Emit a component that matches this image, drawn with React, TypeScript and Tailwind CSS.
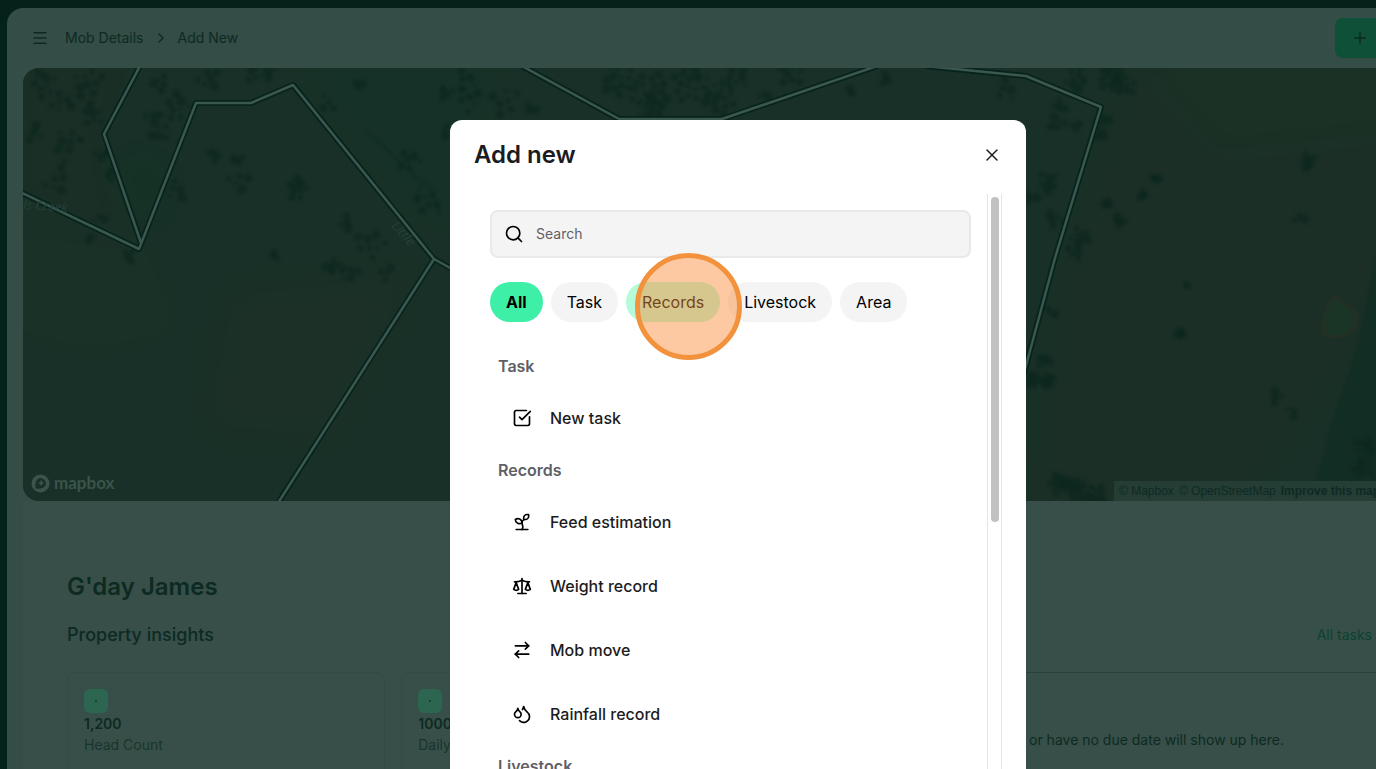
import { useState } from "react";
import {
  ArrowRightLeft, ChevronRight, Droplets, Menu, Plus, Scale, Search, Sprout, SquareCheckBig, X,
} from "lucide-react";
import clsx from "clsx";

const filters = ["All", "Task", "Records", "Livestock", "Area"];

const sections = [
  { title: "Task", items: [{ label: "New task", icon: SquareCheckBig }] },
  {
    title: "Records",
    items: [
      { label: "Feed estimation", icon: Sprout },
      { label: "Weight record", icon: Scale },
      { label: "Mob move", icon: ArrowRightLeft },
      { label: "Rainfall record", icon: Droplets },
    ],
  },
  { title: "Livestock", items: [] },
];

const insights = [
  { value: "1,200", label: "Head Count" },
  { value: "1000", label: "Daily" },
];

// Paddock boundaries
const fences = [
  "M140 66 L104 134 L141 243",
  "M20 192 L139 249 L196 103 L251 103 L293 85 L434 259 L278 503",
  "M434 259 L470 279",
  "M522 66 L619 119 L722 119 L880 65",
  "M925 66 L1026 76 L1101 107 L1055 258 L1020 388",
];

// Tree clusters: x, y, spread, count
const clusters = [
  [45, 85, 14, 8], [88, 82, 16, 9], [62, 102, 12, 6], [92, 115, 12, 7], [68, 140, 14, 7],
  [55, 185, 12, 5], [35, 135, 10, 4], [62, 163, 6, 2], [100, 155, 8, 3], [110, 175, 6, 3],
  [160, 82, 9, 5], [208, 80, 12, 6], [255, 75, 10, 5], [270, 72, 8, 4], [152, 118, 9, 4],
  [178, 108, 14, 8], [160, 134, 10, 5], [175, 190, 12, 6], [215, 157, 7, 3], [238, 160, 6, 3],
  [238, 182, 12, 5], [298, 190, 11, 9], [326, 103, 10, 4], [358, 84, 6, 3], [410, 160, 12, 6],
  [425, 200, 14, 7], [345, 222, 8, 4], [370, 245, 16, 8], [335, 266, 10, 6], [350, 272, 10, 5],
  [386, 272, 8, 4], [274, 254, 5, 3], [100, 218, 7, 3], [89, 238, 4, 2], [447, 92, 8, 4],
  [445, 130, 6, 3], [470, 100, 14, 6], [505, 100, 16, 7], [530, 108, 7, 3], [465, 80, 12, 5],
  [620, 80, 18, 14], [650, 92, 20, 16], [690, 84, 20, 16], [720, 98, 18, 14], [650, 110, 16, 12],
  [735, 80, 14, 8], [790, 73, 14, 8], [765, 95, 6, 3], [885, 80, 6, 3], [852, 92, 4, 2],
  [1075, 78, 12, 8], [1112, 78, 14, 14], [1125, 84, 12, 10], [1060, 105, 8, 4], [1005, 90, 12, 5],
  [1058, 122, 9, 5], [1075, 126, 6, 3], [1102, 122, 8, 6], [1102, 136, 6, 4], [1048, 182, 10, 8],
  [1032, 198, 6, 4], [1054, 220, 9, 5], [1080, 236, 10, 8], [1076, 252, 9, 5], [1108, 204, 4, 4],
  [1143, 195, 4, 4], [1155, 179, 4, 4], [1120, 221, 6, 6], [1308, 161, 8, 7], [1300, 218, 7, 3],
  [1181, 334, 5, 6], [1187, 285, 3, 2], [1043, 361, 7, 6], [1035, 380, 8, 9], [1048, 380, 7, 8],
  [1050, 312, 6, 3], [1277, 398, 8, 4], [1293, 412, 6, 3], [1060, 485, 11, 14], [1080, 490, 13, 16],
  [1095, 496, 11, 12], [1366, 448, 10, 8], [1364, 468, 10, 8], [130, 255, 8, 4],
];

const trees = clusters.flatMap(([x, y, spread, count], c) =>
  Array.from({ length: count }, (_, i) => {
    const angle = i * 2.4 + c * 1.7;
    const reach = spread * Math.sqrt((i + 0.3) / count);
    return { x: x + Math.cos(angle) * reach, y: y + Math.sin(angle) * reach, r: 2 + ((i * 7 + c * 3) % 5) * 0.6 };
  })
);

function PaddockMap() {
  return (
    <svg
      className="absolute inset-0 h-full w-full"
      viewBox="0 0 1353 433"
      preserveAspectRatio="xMinYMin slice"
      aria-hidden="true"
    >
      <defs>
        <filter id="soft" x="-20%" y="-20%" width="140%" height="140%" colorInterpolationFilters="sRGB">
          <feGaussianBlur stdDeviation="1.6" />
        </filter>
        <filter id="haze" x="-30%" y="-30%" width="160%" height="160%" colorInterpolationFilters="sRGB">
          <feGaussianBlur stdDeviation="18" />
        </filter>
      </defs>
      <rect width="1353" height="433" fill="#183027" />
      <g transform="translate(-23 -68)">
        <g filter="url(#haze)">
          <rect x="-60" y="0" width="1500" height="600" fill="#183027" />
          <path d="M20 60H135L100 134L139 249L20 193Z" fill="#1a2f26" />
          <path d="M20 240H140L180 330L90 350L20 330Z" fill="#1a3127" />
          <path d="M230 290L420 270L330 440L200 430Z" fill="#1c3027" />
          <path d="M110 150L170 170L145 240Z" fill="#133226" />
          <path d="M290 60H500L450 240L400 200Z" fill="#163228" />
          <path d="M1130 60H1400V300L1320 400L1230 520H1030L1060 280Z" fill="#1b2f26" />
          <path d="M1140 60H1400V130L1220 150Z" fill="#1b3125" />
        </g>
        <path d="M1376 255L1358 345L1330 430L1312 501H1376Z" fill="#122d23" filter="url(#soft)" />
        <path
          d="M1334 297C1326 305 1322 318 1324 335C1334 339 1347 337 1356 325C1359 313 1350 305 1334 297Z"
          fill="#1a3426"
          stroke="#242f25"
          strokeWidth="3"
        />
        <path d="M365 130C385 145 400 165 418 178S432 200 440 215" fill="none" stroke="#112a21" strokeWidth="2" filter="url(#soft)" />
        <g fill="#0c261e" fillOpacity="0.7" filter="url(#soft)">
          {trees.map((tree, i) => (
            <circle key={i} cx={tree.x} cy={tree.y} r={tree.r} />
          ))}
        </g>
        <g fill="none" strokeLinejoin="round">
          {fences.map((d) => (
            <path key={d} d={d} stroke="#06231c" strokeWidth="6" />
          ))}
          {fences.map((d) => (
            <path key={d} d={d} stroke="#3b574e" strokeWidth="2.5" />
          ))}
        </g>
        <g fill="#25423a" fontFamily="Open Sans, sans-serif" fontSize="13" fontStyle="italic">
          <text transform="translate(23 209) rotate(4)">ls Creek</text>
          <text transform="translate(391 226) rotate(48)">Little</text>
        </g>
      </g>
    </svg>
  );
}

function MapboxLogo() {
  return (
    <div className="absolute bottom-2 left-2 flex items-center gap-1 text-[#3b544b]">
      <svg width="19" height="19" viewBox="0 0 19 19" aria-hidden="true">
        <circle cx="9.5" cy="9.5" r="9" fill="currentColor" />
        <path d="M4.6 14.4C3.9 10.2 4.6 7.2 6.4 5.4A5.2 5.2 0 0 1 13.8 12.6C12 14.4 8.8 15.1 4.6 14.4Z" fill="#183027" />
        <path d="M10.2 5.6L11.2 7.9L13.5 8.9L11.2 9.9L10.2 12.2L9.2 9.9L6.9 8.9L9.2 7.9Z" fill="currentColor" />
      </svg>
      <span className="font-[Lato,sans-serif] text-[17px] leading-5 font-bold">mapbox</span>
    </div>
  );
}

function Dashboard() {
  return (
    <div className="h-full pt-2 pl-[7px]">
      <div className="h-full rounded-tl-2xl bg-[#344d46] pl-4">
        {/* Top bar */}
        <header className="flex h-[60px] items-center justify-between text-[#0d2a22]">
          <nav className="flex items-center text-sm">
            <button aria-label="Toggle menu" className="ml-2">
              <Menu size={18} strokeWidth={1.8} />
            </button>
            <a href="#mob" className="ml-4">Mob Details</a>
            <ChevronRight size={16} className="mx-[9px]" />
            <a href="#new">Add New</a>
          </nav>
          <button aria-label="Add new" className="flex h-10 w-[41px] items-center rounded-l-lg bg-[#0f5039] pl-4">
            <Plus size={18} />
          </button>
        </header>

        <div className="relative h-[433px] overflow-hidden rounded-l-2xl">
          <PaddockMap />
          <MapboxLogo />
          <div className="absolute right-0 bottom-0 flex w-[262px] gap-[5px] overflow-hidden bg-[#243d35] pl-[5px] font-['Liberation_Sans',sans-serif] text-xs leading-5 whitespace-nowrap text-[#0f2a23]">
            <a href="#mapbox">© Mapbox</a>
            <a href="#osm">© OpenStreetMap</a>
            <a href="#improve" className="font-bold">Improve this map</a>
          </div>
        </div>

        {/* Overview */}
        <main className="h-full bg-[#374f48] pt-[70px] pl-11 text-[#0d2a22]">
          <h1 className="text-2xl leading-8 font-semibold">G'day James</h1>
          <div className="mt-4 grid grid-cols-2 gap-1">
            <section>
              <h2 className="text-lg leading-8 font-medium">Property insights</h2>
              <div className="mt-[21px] grid grid-cols-2 gap-4">
                {insights.map((insight) => (
                  <div key={insight.label} className="h-32 rounded-lg border border-[#334b44] px-4 pt-4 text-sm">
                    <div className="flex size-6 items-center justify-center rounded-md bg-[#2c6650]">
                      <span className="size-[2px] rounded-full bg-[#0d3a2a]" />
                    </div>
                    <p className="leading-[22px] font-semibold">{insight.value}</p>
                    <p className="leading-5 text-[#17352c]">{insight.label}</p>
                  </div>
                ))}
              </div>
            </section>
            <section className="text-right text-sm">
              <a href="#tasks" className="block pr-1 leading-8 text-[#0b4231]">All tasks</a>
              <div className="mt-[21px] border-t border-[#294239] pt-[57px] pr-[92px]">
                <p className="leading-5">or have no due date will show up here.</p>
              </div>
            </section>
          </div>
        </main>
      </div>
    </div>
  );
}

export default function App() {
  const [active, setActive] = useState("All");
  const [query, setQuery] = useState("");

  return (
    <div className="relative h-screen overflow-hidden bg-[#04211a] font-[Inter,sans-serif]">
      <Dashboard />

      {/* Modal */}
      <div className="absolute inset-0 flex items-start justify-center overflow-hidden pt-[120px] pl-[100px]">
        <div role="dialog" aria-labelledby="dialog-title" className="w-xl rounded-t-xl bg-white px-6 text-[#1c1c1e]">
          <div className="flex h-[70px] items-center justify-between">
            <h2 id="dialog-title" className="text-2xl font-semibold">Add new</h2>
            <button aria-label="Close">
              <X size={20} strokeWidth={1.8} />
            </button>
          </div>

          <div className="mt-1 flex">
            <div className="min-w-0 flex-1 px-4 pt-4">
              <label className="flex h-12 items-center gap-3 rounded-lg border-2 border-[#e9e9e9] bg-[#f4f4f4] px-3">
                <Search size={20} className="text-black" />
                <input
                  type="search"
                  aria-label="Search"
                  placeholder="Search"
                  value={query}
                  onChange={(e) => setQuery(e.target.value)}
                  className="min-w-0 flex-1 bg-transparent text-sm outline-none placeholder:text-[#5f5f66]"
                />
              </label>

              <div className="relative mt-6 flex gap-2">
                {filters.map((name) => (
                  <button
                    key={name}
                    onClick={() => setActive(name)}
                    className={clsx(
                      "h-10 rounded-full px-4 text-base text-black",
                      name === active ? "bg-[#3eefa8] font-bold" : "font-normal",
                      name !== active && (name === "Records" ? "bg-[#b5fbd9]" : "bg-[#f4f4f4]")
                    )}
                  >
                    {name}
                  </button>
                ))}
                {/* Click marker */}
                <span className="pointer-events-none absolute -top-[29px] left-[145px] size-[107px] rounded-full border-5 border-[#f2923c] bg-[#f98c3a]/47" />
              </div>

              <div className="mt-7">
                {sections.map((section) => (
                  <section key={section.title}>
                    <h3 className="px-2 py-1 text-base leading-6 font-semibold text-[#5f5f66]">{section.title}</h3>
                    <ul className="py-1">
                      {section.items.map((item) => (
                        <li key={item.label} className="flex h-16 items-center">
                          <button className="flex items-center gap-[18px] px-[22px] text-base font-medium">
                            <item.icon size={20} className="text-black" />
                            {item.label}
                          </button>
                        </li>
                      ))}
                    </ul>
                  </section>
                ))}
              </div>
            </div>

            <div className="flex w-[15px] shrink-0 justify-center border-x border-[#e4e4e4] pt-[3px]">
              <div className="h-[325px] w-2 rounded-full bg-[#c1c1c1]" />
            </div>
          </div>
        </div>
      </div>
    </div>
  );
}
